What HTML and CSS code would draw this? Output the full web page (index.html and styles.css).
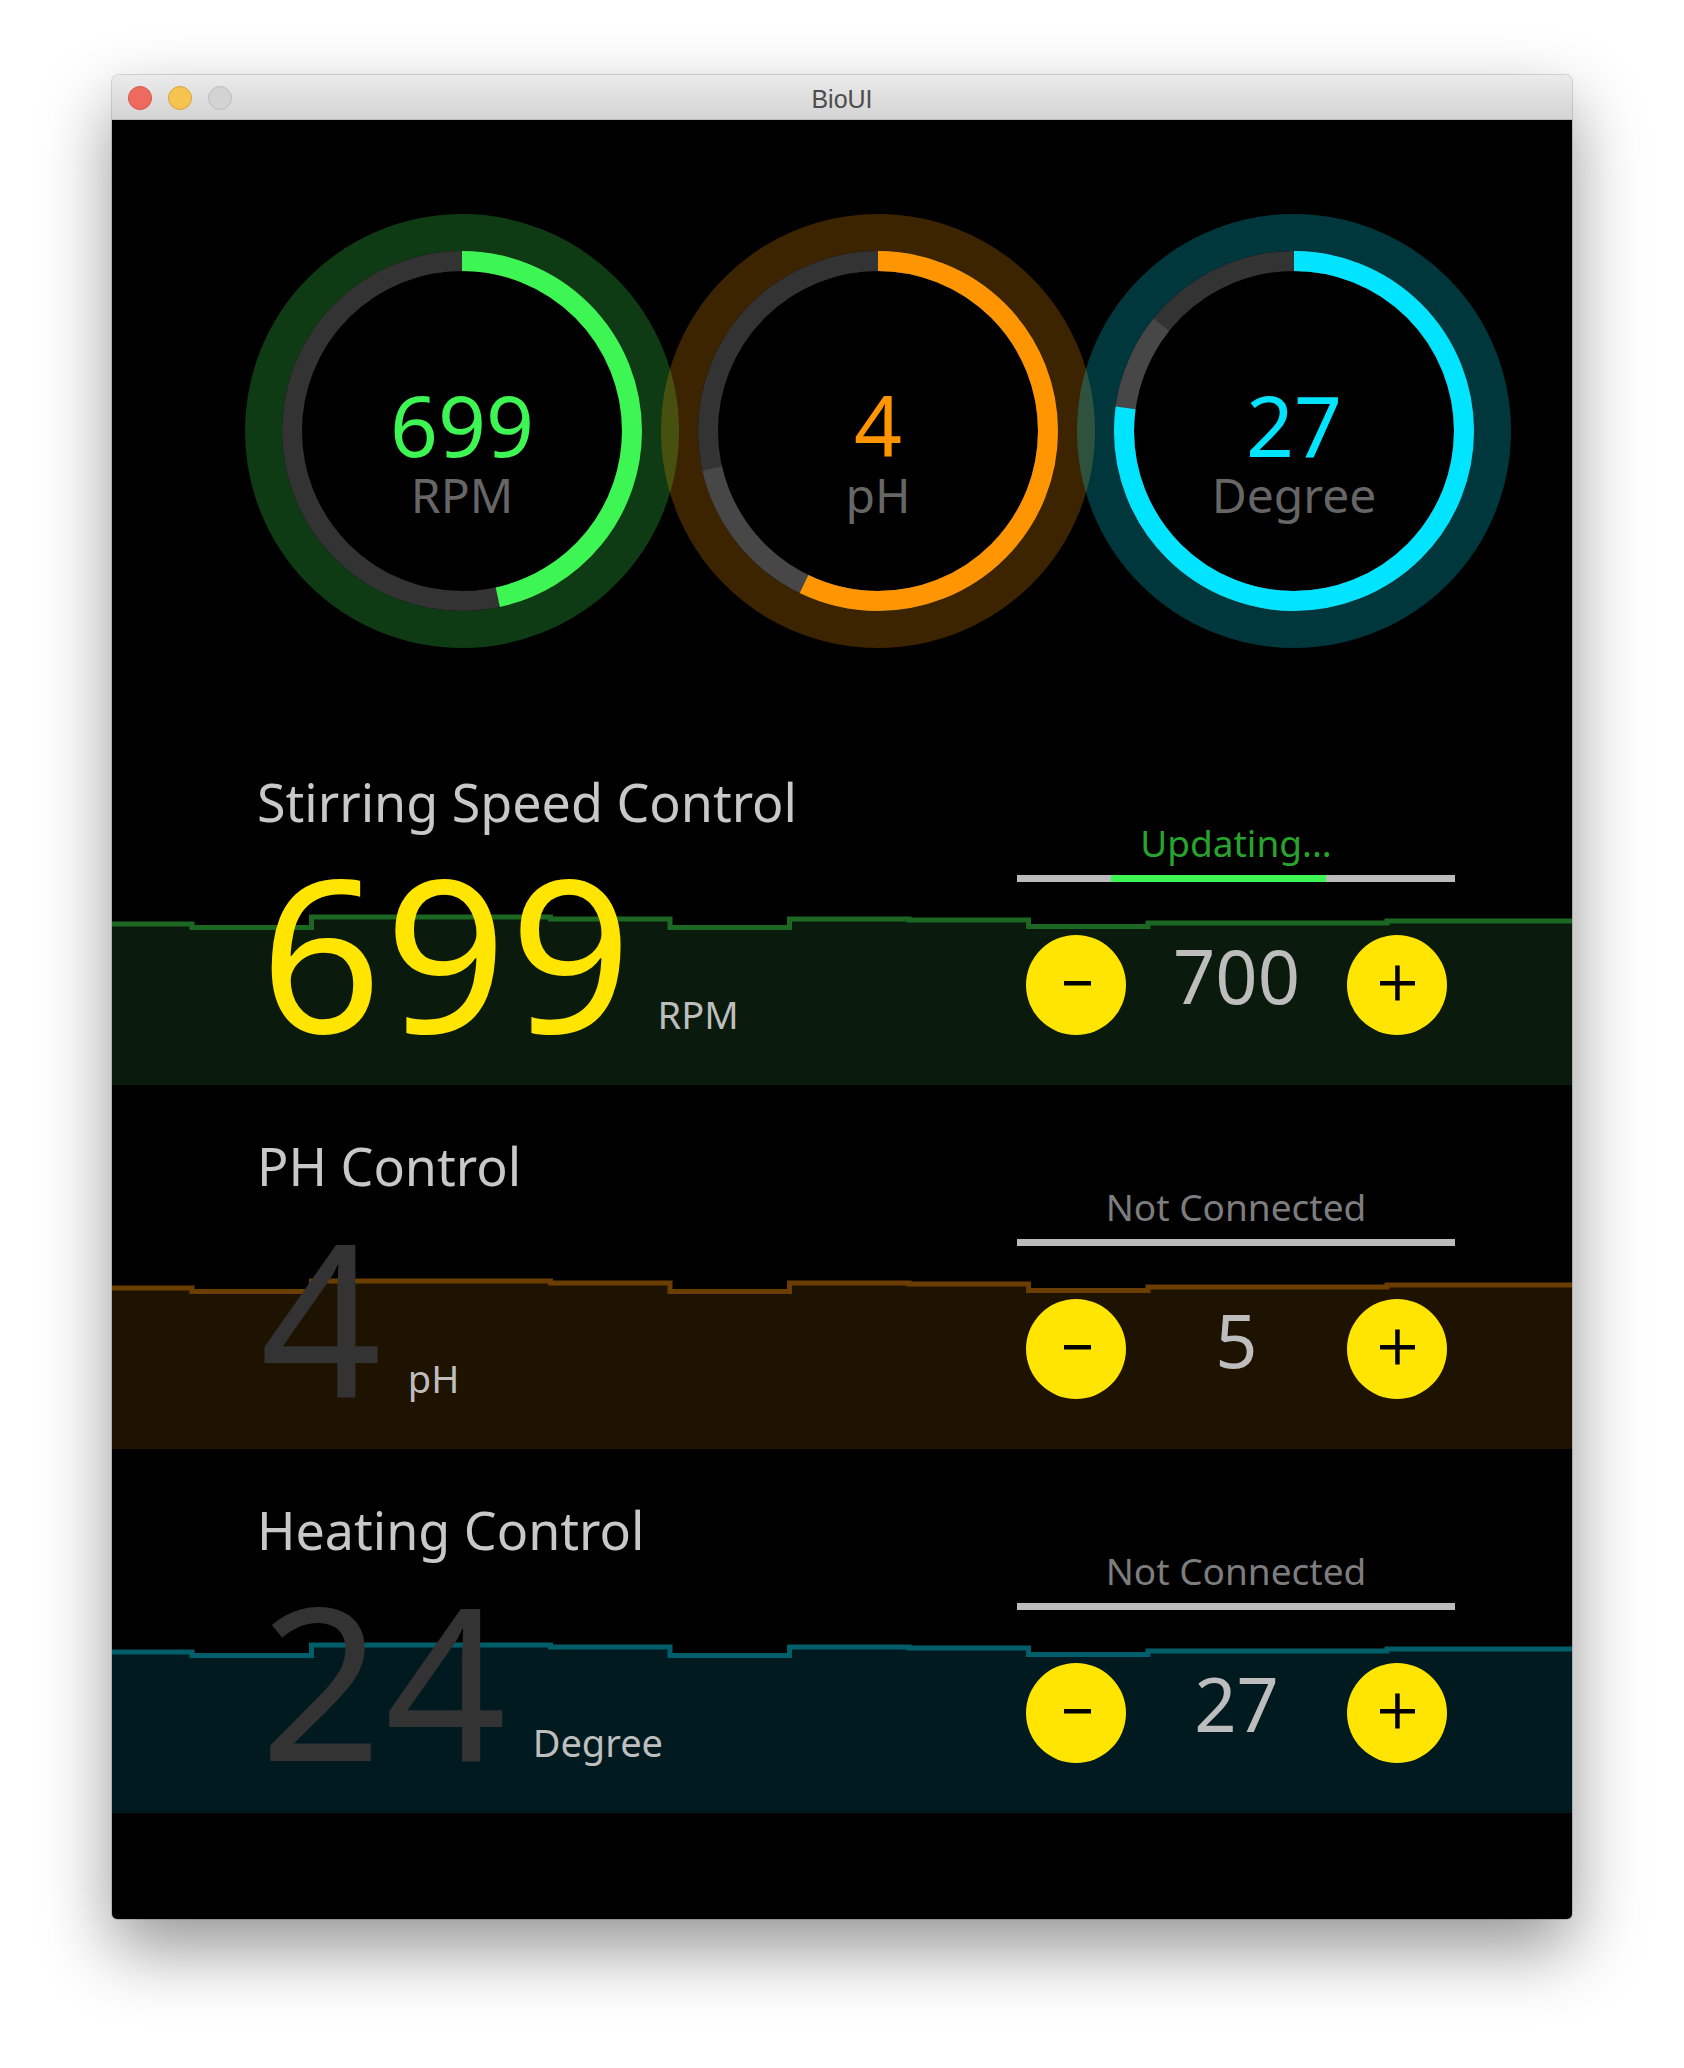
FILE: index.html
```html
<!DOCTYPE html>
<html>
<head>
<meta charset="utf-8">
<title>BioUI</title>
<link rel="stylesheet" href="styles.css">
</head>
<body>
<div class="window">
  <div class="titlebar">
    <div class="lights">
      <span class="light red"></span>
      <span class="light yellow"></span>
      <span class="light gray"></span>
    </div>
    <div class="title">BioUI</div>
    <div></div>
  </div>
  <div class="content">
    <div class="gauges">
      <div class="gauge g-green">
        <svg class="ring" width="434" height="434" viewBox="0 0 434 434">
          <circle class="halo" cx="217" cy="217" r="198.5"/>
          <circle class="track" cx="217" cy="217" r="170"/>
          <circle class="value" cx="217" cy="217" r="170" stroke-dasharray="497.75 2000" transform="rotate(-90 217 217)"/>
        </svg>
        <div class="gauge-text">
          <div class="g-num">699</div>
          <div class="g-unit">RPM</div>
        </div>
      </div>
      <div class="gauge g-orange">
        <svg class="ring" width="434" height="434" viewBox="0 0 434 434">
          <circle class="halo" cx="217" cy="217" r="198.5"/>
          <circle class="track" cx="217" cy="217" r="170"/>
          <circle class="target" cx="217" cy="217" r="170" stroke-dasharray="762.96 2000" transform="rotate(-90 217 217)"/>
          <circle class="value" cx="217" cy="217" r="170" stroke-dasharray="610.37 2000" transform="rotate(-90 217 217)"/>
        </svg>
        <div class="gauge-text">
          <div class="g-num">4</div>
          <div class="g-unit">pH</div>
        </div>
      </div>
      <div class="gauge g-cyan">
        <svg class="ring" width="434" height="434" viewBox="0 0 434 434">
          <circle class="halo" cx="217" cy="217" r="198.5"/>
          <circle class="track" cx="217" cy="217" r="170"/>
          <circle class="target" cx="217" cy="217" r="170" stroke-dasharray="915.55 2000" transform="rotate(-90 217 217)"/>
          <circle class="value" cx="217" cy="217" r="170" stroke-dasharray="823.99 2000" transform="rotate(-90 217 217)"/>
        </svg>
        <div class="gauge-text">
          <div class="g-num">27</div>
          <div class="g-unit">Degree</div>
        </div>
      </div>
    </div>

    <section class="ctrl c-green">
      <svg class="chart" viewBox="0 0 1460 364" preserveAspectRatio="none">
        <path class="chart-fill" d="M0 203 H80 V206.5 H199.5 V196 H438.5 V198 H558 V206.5 H677.5 V198 H797 V199 H916.5 V205.5 H1036 V202 H1275 V200 H1460 V364 H0 Z"/>
        <path class="chart-line" d="M0 203 H80 V206.5 H199.5 V196 H438.5 V198 H558 V206.5 H677.5 V198 H797 V199 H916.5 V205.5 H1036 V202 H1275 V200 H1460"/>
      </svg>
      <div class="ctrl-left">
        <div class="ctrl-title">Stirring Speed Control</div>
        <div class="reading"><span class="big live">699</span><span class="unit">RPM</span></div>
      </div>
      <div class="ctrl-right">
        <div class="status updating">Updating...</div>
        <div class="bar"><div class="bar-fill"></div></div>
        <div class="stepper">
          <div class="btn">
            <svg width="100" height="100" viewBox="0 0 100 100"><rect x="38" y="46" width="27" height="4.5" fill="#000"/></svg>
          </div>
          <div class="setpoint">700</div>
          <div class="btn">
            <svg width="100" height="100" viewBox="0 0 100 100"><rect x="33" y="46" width="35" height="4.5" fill="#000"/><rect x="48.2" y="30.5" width="4.5" height="35" fill="#000"/></svg>
          </div>
        </div>
      </div>
    </section>

    <section class="ctrl c-orange">
      <svg class="chart" viewBox="0 0 1460 364" preserveAspectRatio="none">
        <path class="chart-fill" d="M0 203 H80 V206.5 H199.5 V196 H438.5 V198 H558 V206.5 H677.5 V198 H797 V199 H916.5 V205.5 H1036 V202 H1275 V200 H1460 V364 H0 Z"/>
        <path class="chart-line" d="M0 203 H80 V206.5 H199.5 V196 H438.5 V198 H558 V206.5 H677.5 V198 H797 V199 H916.5 V205.5 H1036 V202 H1275 V200 H1460"/>
      </svg>
      <div class="ctrl-left">
        <div class="ctrl-title">PH Control</div>
        <div class="reading"><span class="big dim">4</span><span class="unit">pH</span></div>
      </div>
      <div class="ctrl-right">
        <div class="status offline">Not Connected</div>
        <div class="bar"></div>
        <div class="stepper">
          <div class="btn">
            <svg width="100" height="100" viewBox="0 0 100 100"><rect x="38" y="46" width="27" height="4.5" fill="#000"/></svg>
          </div>
          <div class="setpoint">5</div>
          <div class="btn">
            <svg width="100" height="100" viewBox="0 0 100 100"><rect x="33" y="46" width="35" height="4.5" fill="#000"/><rect x="48.2" y="30.5" width="4.5" height="35" fill="#000"/></svg>
          </div>
        </div>
      </div>
    </section>

    <section class="ctrl c-cyan">
      <svg class="chart" viewBox="0 0 1460 364" preserveAspectRatio="none">
        <path class="chart-fill" d="M0 203 H80 V206.5 H199.5 V196 H438.5 V198 H558 V206.5 H677.5 V198 H797 V199 H916.5 V205.5 H1036 V202 H1275 V200 H1460 V364 H0 Z"/>
        <path class="chart-line" d="M0 203 H80 V206.5 H199.5 V196 H438.5 V198 H558 V206.5 H677.5 V198 H797 V199 H916.5 V205.5 H1036 V202 H1275 V200 H1460"/>
      </svg>
      <div class="ctrl-left">
        <div class="ctrl-title">Heating Control</div>
        <div class="reading"><span class="big dim">24</span><span class="unit">Degree</span></div>
      </div>
      <div class="ctrl-right">
        <div class="status offline">Not Connected</div>
        <div class="bar"></div>
        <div class="stepper">
          <div class="btn">
            <svg width="100" height="100" viewBox="0 0 100 100"><rect x="38" y="46" width="27" height="4.5" fill="#000"/></svg>
          </div>
          <div class="setpoint">27</div>
          <div class="btn">
            <svg width="100" height="100" viewBox="0 0 100 100"><rect x="33" y="46" width="35" height="4.5" fill="#000"/><rect x="48.2" y="30.5" width="4.5" height="35" fill="#000"/></svg>
          </div>
        </div>
      </div>
    </section>
  </div>
</div>
</body>
</html>
```

FILE: styles.css
```css
html, body {
  margin: 0;
  padding: 0;
  background: #ffffff;
}

body {
  width: 1684px;
  height: 2068px;
  overflow: hidden;
  font-family: "Noto Sans", "Open Sans", sans-serif;
}

.window {
  margin: 75px 0 0 112px;
  width: 1460px;
  border-radius: 7px 7px 5px 5px;
  overflow: hidden;
  box-shadow: 0 30px 70px rgba(0, 0, 0, 0.42), 0 0 0 1px rgba(0, 0, 0, 0.14);
}

/* ---------- title bar ---------- */
.titlebar {
  height: 44px;
  border-bottom: 1px solid #b8b8b8;
  background: linear-gradient(#ebebeb, #d4d4d4);
  display: grid;
  grid-template-columns: 1fr auto 1fr;
  align-items: center;
}

.lights {
  display: flex;
  gap: 16px;
  padding-left: 16px;
}

.light {
  width: 22px;
  height: 22px;
  border-radius: 50%;
  border: 1px solid;
}

.light.red { background: #ee6a5e; border-color: #d5544a; }
.light.yellow { background: #f6c250; border-color: #d9a33b; }
.light.gray { background: #d3d3d3; border-color: #bdbdbd; }

.title {
  font-family: "Liberation Sans", Arial, sans-serif;
  font-size: 25px;
  line-height: 44px;
  padding-top: 2px;
  color: #4d4d4d;
}

/* ---------- content ---------- */
.content {
  background: #000;
  height: 1799px;
}

.gauges {
  height: 601px;
  box-sizing: border-box;
  padding: 94px 0 0 133px;
  display: flex;
}

.gauge {
  width: 434px;
  height: 434px;
  display: grid;
}

.gauge + .gauge {
  margin-left: -18px;
}

.gauge > * {
  grid-area: 1 / 1;
}

.ring circle {
  fill: none;
}

.ring .halo { stroke-width: 37; }
.ring .track { stroke: #333333; stroke-width: 20; }
.ring .target { stroke: #474747; stroke-width: 20; }
.ring .value { stroke-width: 20; }

.g-green .halo { stroke: rgba(61, 245, 83, 0.24); }
.g-green .value { stroke: #3df553; }
.g-green .g-num { color: #3df553; }

.g-orange .halo { stroke: rgba(255, 149, 0, 0.24); }
.g-orange .value { stroke: #ff9500; }
.g-orange .g-num { color: #ff9500; }

.g-cyan .halo { stroke: rgba(0, 229, 255, 0.24); }
.g-cyan .value { stroke: #00e4ff; }
.g-cyan .g-num { color: #00e4ff; }

.gauge-text {
  display: flex;
  flex-direction: column;
  align-items: center;
  justify-content: center;
  gap: 4px;
  padding-top: 39px;
}

.g-num {
  font-size: 84px;
  line-height: 84px;
}

.g-unit {
  font-size: 48px;
  line-height: 48px;
  color: #666666;
}

/* ---------- control sections ---------- */
.ctrl {
  position: relative;
  height: 364px;
  display: flex;
  justify-content: space-between;
}

.chart {
  position: absolute;
  left: 0;
  top: 0;
  width: 1460px;
  height: 364px;
  z-index: 0;
}

.chart-line {
  fill: none;
  stroke-width: 5;
}

.c-green .chart-fill { fill: #0a1a0c; }
.c-green .chart-line { stroke: #1c6823; }
.c-orange .chart-fill { fill: #1e1200; }
.c-orange .chart-line { stroke: #6b3e00; }
.c-cyan .chart-fill { fill: #001a1f; }
.c-cyan .chart-line { stroke: #005e6b; }

.ctrl-left,
.ctrl-right {
  position: relative;
  z-index: 1;
}

.ctrl-left {
  padding: 51px 0 0 145px;
}

.ctrl-title {
  font-size: 52px;
  line-height: 60px;
  color: #c8c8c8;
  white-space: nowrap;
}

.reading {
  margin-top: 12px;
  font-size: 213px;
  line-height: 213px;
  white-space: nowrap;
}

.big {
  margin-left: 3px;
  letter-spacing: 3px;
}

.big.live { color: #ffe500; }
.big.dim { color: #333333; }

.unit {
  margin-left: 23px;
  font-size: 38px;
  vertical-align: 4px;
  color: #bebebe;
}

.ctrl-right {
  width: 438px;
  margin-right: 117px;
  padding-top: 100px;
}

.status {
  font-size: 37px;
  line-height: 44px;
  text-align: center;
}

.status.updating { color: #28a42e; }
.status.offline { color: #7d7d7d; }

.bar {
  margin-top: 10px;
  height: 7px;
  background: #bbbbbb;
}

.bar-fill {
  margin-left: 94px;
  width: 215px;
  height: 7px;
  background: #3df553;
}

.stepper {
  margin-top: 53px;
  height: 100px;
  padding: 0 8px 0 9px;
  display: flex;
  align-items: center;
}

.btn {
  width: 100px;
  height: 100px;
  border-radius: 50%;
  background: #ffe500;
  flex: none;
}

.btn svg {
  display: block;
}

.setpoint {
  flex: 1;
  text-align: center;
  font-size: 74px;
  line-height: 74px;
  margin-bottom: 18px;
  color: #bdbdbd;
}
```
